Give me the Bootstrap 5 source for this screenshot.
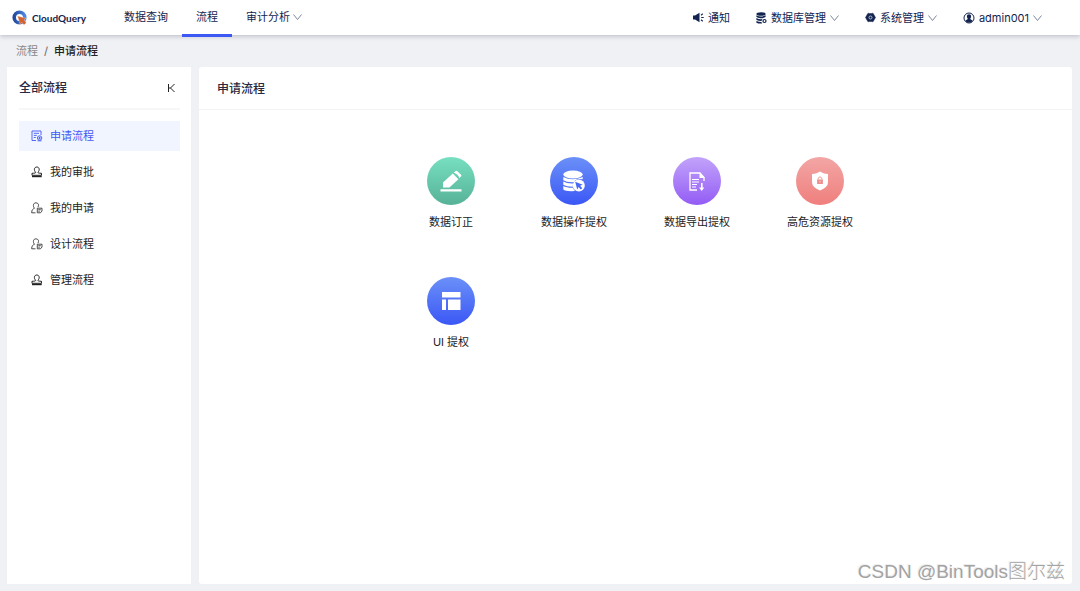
<!DOCTYPE html>
<html lang="zh-CN">
<head>
<meta charset="utf-8">
<meta name="viewport" content="width=device-width, initial-scale=1">
<title>CloudQuery</title>
<link href="https://cdn.jsdelivr.net/npm/bootstrap@5.3.0/dist/css/bootstrap.min.css" rel="stylesheet">
<style>
body{background:#f0f1f5;color:#222;font-family:Inter,"Noto Sans CJK SC",sans-serif;font-size:11px;line-height:18px}
a{color:inherit;text-decoration:none}
svg{display:block;flex:none}
.topbar{height:35px;background:#fff;box-shadow:0 1px 5px rgba(0,21,41,.25);color:#12244f;padding:0 38px 0 12px;z-index:1}
.brand{font:700 10px/16px Lato,sans-serif;gap:4px;width:98px;color:#15224c}
.main-link{padding:0 14px;height:37px;padding-bottom:3px;gap:3px;border:0;background:none;color:inherit}
.main-link.active{border-bottom:3px solid #3c58f5;padding-bottom:0}
.tools{gap:26px}
.tool{gap:4px;border:0;background:none;padding:0;color:inherit}
.chev{stroke:#7d879f;fill:none}
.crumbs{padding:7px 16px;height:32px;--bs-breadcrumb-divider-color:#777;--bs-breadcrumb-item-padding-x:6px;--bs-breadcrumb-item-active-color:#222;color:#888;font-size:11px}
.crumbs .active{font-weight:500}
.workspace{gap:8px;padding:0 8px 7px 7px}
.side{width:184px;background:#fff;padding:0 11px 0 12px}
.side-head{height:43px;border-bottom:2px solid #f7f7f9}
.title{font-size:12px;line-height:18px;font-weight:500;margin:0;color:#282840}
.collapse-btn{border:0;background:none;padding:4px;color:#222}
.side-nav{gap:6px;padding-top:11px}
.side-link{height:30px;padding:0 12px;gap:7px;color:#222}
.side-link.active{background:#f0f5ff;color:#4158f5}
.panel{background:#fff;border-radius:3px}
.panel-head{height:43px;border-bottom:1px solid #f3f3f5;padding:2px 18px 0}
.tiles{width:100%;max-width:492px;margin:47px auto 0}
.tiles>div{height:120px}
.disc{width:48px;height:48px;margin-bottom:8px;color:#fff}
.green{background:linear-gradient(#77dfc0,#57b297)}
.blue{background:linear-gradient(#6b90f8,#3b57f5)}
.purple{background:linear-gradient(#c2a3fa,#935cf5)}
.red{background:linear-gradient(#f2a6a5,#ef7f7d)}
.watermark{right:15px;bottom:5px;font:300 19px/28px "Liberation Sans","Noto Sans CJK SC",sans-serif;color:#a3a3a3;text-shadow:-1px -1px 0 #eee}
</style>
</head>
<body>
<div class="d-flex flex-column min-vh-100 position-relative">
<header class="topbar d-flex align-items-center position-relative">
  <a class="brand d-flex align-items-center" href="#">
    <svg width="16" height="16" viewBox="0 0 16 16"><defs><linearGradient id="lg"><stop stop-color="#244a9c"/><stop offset="1" stop-color="#4d87e6"/></linearGradient></defs><circle cx="7.500" cy="7.500" r="5.300" fill="none" stroke="url(#lg)" stroke-width="3.600"/><path d="M5.500 6 14.200 8.300 12 9.800 14.300 12.800 12 15 9.600 12.200 8.200 14.500z" fill="#d4622f" stroke="#fff" stroke-width=".3"/></svg>
    CloudQuery
  </a>
  <nav class="d-flex align-items-start align-self-start">
    <a class="main-link d-flex align-items-center" href="#">数据查询</a>
    <a class="main-link active d-flex align-items-center" href="#" aria-current="page">流程</a>
    <button class="main-link d-flex align-items-center" type="button">审计分析
      <svg class="chev" width="9" height="8" viewBox="0 0 9 8"><path d="M.5 1.500 4.500 6.500 8.500 1.500"/></svg></button>
  </nav>
  <div class="tools d-flex align-items-center ms-auto">
    <button class="tool d-flex align-items-center" type="button">
      <svg width="11" height="11" viewBox="0 0 11 11" fill="currentColor"><path d="M0 3.500h2L6.500.8v9.400L2 7.500H0z"/><path d="M8 3.200 9.800 1.800M8.200 5.500h2.500M8 7.800l1.800 1.400" stroke="currentColor" stroke-width="1.100"/></svg>通知</button>
    <button class="tool d-flex align-items-center" type="button">
      <svg width="11" height="12" viewBox="0 0 11 12"><g fill="currentColor"><ellipse cx="5" cy="2" rx="4.600" ry="1.800"/><path d="M.4 3.200q4.600 2.400 9.200 0v1.900q-4.600 2.400-9.200 0zM.4 6q3 1.600 6 1.100L5.500 9q-3 0-5.100-1zM.4 8.900Q3 10.100 5.500 10l.5 1.600Q2 11.700.4 10.700z"/></g><circle cx="8.500" cy="9" r="1.500" fill="#fff" stroke="currentColor" stroke-width="1.200"/></svg>数据库管理
      <svg class="chev" width="9" height="8" viewBox="0 0 9 8"><path d="M.5 1.500 4.500 6.500 8.500 1.500"/></svg></button>
    <button class="tool d-flex align-items-center" type="button">
      <svg width="11" height="11" viewBox="0 0 11 11"><path d="M3 1.200 4.500 1.500h2L8 1.200l1.200 2L10.500 5.500 9.200 7.800 8 9.800 6.500 9.500h-2L3 9.800 1.800 7.800.5 5.500 1.800 3.200z" fill="currentColor" stroke="currentColor" stroke-linejoin="round" stroke-width=".5"/><circle cx="5.500" cy="5.500" r="1.500" fill="#12244f" stroke="#c8cddb" stroke-width=".9"/></svg>系统管理
      <svg class="chev" width="9" height="8" viewBox="0 0 9 8"><path d="M.5 1.500 4.500 6.500 8.500 1.500"/></svg></button>
    <button class="tool d-flex align-items-center" type="button">
      <svg width="12" height="12" viewBox="0 0 12 12"><circle cx="6" cy="6" r="5" fill="none" stroke="currentColor"/><path d="M6 2.200c1.300 0 2.100.9 2.100 2.200 0 1-.5 1.900-1 2.300.2.900 1.900.8 2.400 2C8.500 10.200 7.500 10.500 6 10.500S3.500 10.200 2.500 8.700c.5-1.200 2.200-1.100 2.400-2-.5-.4-1-1.300-1-2.300 0-1.300.8-2.200 2.100-2.200z" fill="currentColor"/></svg>admin001
      <svg class="chev" width="9" height="8" viewBox="0 0 9 8"><path d="M.5 1.500 4.500 6.500 8.500 1.500"/></svg></button>
  </div>
</header>
<nav aria-label="breadcrumb">
  <ol class="breadcrumb crumbs mb-0">
    <li class="breadcrumb-item"><a href="#">流程</a></li>
    <li class="breadcrumb-item active" aria-current="page">申请流程</li>
  </ol>
</nav>
<div class="workspace d-flex flex-grow-1">
  <aside class="side flex-shrink-0">
    <div class="side-head d-flex align-items-center justify-content-between">
      <h2 class="title">全部流程</h2>
      <button class="collapse-btn" type="button" aria-label="收起"><svg width="9" height="10" viewBox="0 0 9 10" fill="none" stroke="currentColor"><path d="M1.500 1v8M7.500 1 3.500 5l4 4M1.500 5h2"/></svg></button>
    </div>
    <nav class="side-nav d-flex flex-column">
      <a class="side-link active d-flex align-items-center" href="#"><svg width="12" height="12" viewBox="0 0 12 12" fill="none" stroke="currentColor" stroke-width=".9"><path d="M5 10.500H1V1h9v4M2.800 3.300h5.200M2.800 5.400h3M2.800 7.500h2"/><circle cx="8.600" cy="8" r="2.200"/><path d="M7.400 8h2.400M8.600 6.800v2.400M6.500 10.800h4"/></svg>申请流程</a>
      <a class="side-link d-flex align-items-center" href="#"><svg width="12" height="12" viewBox="0 0 12 12" fill="none" stroke="currentColor"><path d="M4.700 6.200C2.500 4.300 3.200 1 5.800 1s3.300 3.300 1.100 5.200c0 1 1 .9 3.600 1.100v2H1v-2c2.700-.2 3.700-.1 3.700-1.100z"/><path d="M1 10.500h9.700" stroke-width="1.400"/></svg>我的审批</a>
      <a class="side-link d-flex align-items-center" href="#"><svg width="12" height="12" viewBox="0 0 12 12" fill="none" stroke="currentColor" stroke-width=".8"><path d="M4.500 10.800H.7c0-3 1-3.700 2.800-4.500C1.500 4 2.300 .8 4.900 .8s3.300 2.500 2.100 4.300M6.300 6.200h4.700V9l-1.500 1.800H6.300zM7.300 7.700h2.500M7.300 9.200h1.500"/></svg>我的申请</a>
      <a class="side-link d-flex align-items-center" href="#"><svg width="12" height="12" viewBox="0 0 12 12" fill="none" stroke="currentColor" stroke-width=".8"><path d="M4.500 10.800H.7c0-3 1-3.700 2.800-4.500C1.500 4 2.300 .8 4.900 .8s3.300 2.500 2.100 4.300M6.300 6.200h4.700V9l-1.500 1.800H6.300zM7.300 7.700h2.500M7.300 9.200h1.500"/></svg>设计流程</a>
      <a class="side-link d-flex align-items-center" href="#"><svg width="12" height="12" viewBox="0 0 12 12" fill="none" stroke="currentColor"><path d="M4.700 6.200C2.500 4.300 3.200 1 5.800 1s3.300 3.300 1.100 5.200c0 1 1 .9 3.600 1.100v2H1v-2c2.700-.2 3.700-.1 3.700-1.100z"/><path d="M1 10.500h9.700" stroke-width="1.400"/></svg>管理流程</a>
    </nav>
  </aside>
  <main class="panel flex-grow-1">
    <div class="panel-head d-flex align-items-center"><h1 class="title">申请流程</h1></div>
    <div class="tiles row row-cols-4 gx-0">
      <div class="col"><a class="d-flex flex-column align-items-center" href="#"><span class="disc green rounded-circle d-flex align-items-center justify-content-center"><svg width="24" height="24" viewBox="0 0 24 24" fill="currentColor"><path d="M4 18.500v-5L13.800 4.600l5.600 5.600-9 8.300zM14.800 3.700l1.800-1.600q.7-.6 1.500 0l4 3.700q.7.700 0 1.500L20.300 9.200q-.5-3.700-5.500-5.500zM1.500 20.200h21v2.300h-21z"/></svg></span>数据订正</a></div>
      <div class="col"><a class="d-flex flex-column align-items-center" href="#"><span class="disc blue rounded-circle d-flex align-items-center justify-content-center"><svg width="24" height="24" viewBox="0 0 24 24" fill="currentColor"><ellipse cx="11" cy="5.500" rx="9.700" ry="4"/><path d="M1.300 8q9 4.500 19.400 0v2.300q-6.200-1.500-9 2.900-7 .4-10.400-2zM1.300 12.500q3.500 2.200 9.700 2l-.2 3.200q-6.500 0-9.500-1.900zM1.300 17q3.200 1.900 9.700 1.800.6 1.800 2 3.200Q3.500 22.600 1.300 20.500z"/><circle cx="16.800" cy="16.500" r="6"/><path d="m13.200 12.800 7.500 2.900-2.600 1 2.200 2.500-1.500 1.300-2.200-2.500-1.400 2.500z" fill="#4868f6"/></svg></span>数据操作提权</a></div>
      <div class="col"><a class="d-flex flex-column align-items-center" href="#"><span class="disc purple rounded-circle d-flex align-items-center justify-content-center"><svg width="24" height="24" viewBox="0 0 24 24" fill="none" stroke="currentColor"><path d="M12 21H5V4h10l4 4.500V12" stroke-width="1.300"/><path d="M14.500 3.500V9H20z" fill="currentColor" stroke="none"/><path d="M7 10.500h7M7 13h7M7 15.500h5M7 18h4"/><path d="M16 14v4.500h-2l2.700 3.500 2.600-3.500h-1.700V14z" fill="currentColor" stroke="none"/></svg></span>数据导出提权</a></div>
      <div class="col"><a class="d-flex flex-column align-items-center" href="#"><span class="disc red rounded-circle d-flex align-items-center justify-content-center"><svg width="24" height="24" viewBox="0 0 24 24"><path d="M12 2.500q4 2.600 8 2.600v8q0 5.500-8 8.400-8-2.900-8-8.400v-8q4 0 8-2.600z" fill="currentColor"/><path d="M9.100 10.500h5.800v4.500H9.100z" fill="#ef8f8d"/><path d="M10.200 10.500V9.800c0-2.300 3.600-2.300 3.600 0v.7" fill="none" stroke="#ef8f8d"/><path d="M12 12v1.500" stroke="#fff" stroke-width=".6"/></svg></span>高危资源提权</a></div>
      <div class="col"><a class="d-flex flex-column align-items-center" href="#"><span class="disc blue rounded-circle d-flex align-items-center justify-content-center"><svg width="24" height="24" viewBox="0 0 24 24" fill="currentColor"><path d="M3 3h18.500v5.500H3zM3 10.500h4V21H3zM9 10.500h12.500V21H9z"/></svg></span>UI 提权</a></div>
    </div>
  </main>
</div>
<div class="watermark position-absolute">CSDN @BinTools图尔兹</div>
</div>
<script src="https://cdn.jsdelivr.net/npm/bootstrap@5.3.0/dist/js/bootstrap.bundle.min.js"></script>
</body>
</html>
